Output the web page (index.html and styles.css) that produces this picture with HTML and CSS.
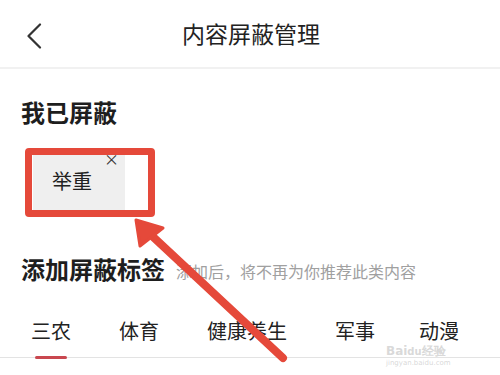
FILE: index.html
```html
<!DOCTYPE html>
<html lang="zh">
<head>
<meta charset="utf-8">
<link rel="stylesheet" href="styles.css">
</head>
<body>
<div class="page">
  <header class="header">
    <svg class="back" width="16" height="26" viewBox="0 0 16 26"><path d="M14 1.5 L2.5 13 L14 24.5" fill="none" stroke="#333" stroke-width="2.2" stroke-linecap="round" stroke-linejoin="round"/></svg>
    <div class="title">内容屏蔽管理</div>
  </header>

  <section class="blocked">
    <h2 class="heading">我已屏蔽</h2>
    <div class="tags">
      <div class="tag">举重<span class="close">×</span></div>
    </div>
  </section>

  <section class="add">
    <div class="add-head">
      <h2 class="heading">添加屏蔽标签</h2>
      <span class="hint">添加后，将不再为你推荐此类内容</span>
    </div>
    <nav class="tabs">
      <div class="tab active">三农</div>
      <div class="tab">体育</div>
      <div class="tab">健康养生</div>
      <div class="tab">军事</div>
      <div class="tab">动漫</div>
    </nav>
  </section>

  <div class="watermark">
    <div class="wm-main">Bai<span class="wm-du">du</span>经验</div>
    <div class="wm-sub">jingyan.baidu.com</div>
  </div>

  <div class="highlight"></div>
  <svg class="arrow" width="500" height="375" viewBox="0 0 500 375">
    <line x1="283" y1="358" x2="150" y2="234" stroke="#e5493a" stroke-width="8" stroke-linecap="round"/>
    <polygon points="136,220 163,228 140,246" fill="#e5493a" stroke="#e5493a" stroke-width="3" stroke-linejoin="round"/>
  </svg>
</div>
</body>
</html>
```
FILE: styles.css
```css
* { box-sizing: border-box; margin: 0; padding: 0; }
html, body { background: #fff; }
body {
  font-family: "Noto Sans CJK SC", "Noto Sans", sans-serif;
  color: #222;
  width: 500px;
  height: 375px;
  overflow: hidden;
}
.page { position: relative; width: 500px; height: 375px; }

.header {
  height: 69px;
  border-bottom: 2px solid #f1f1f1;
  display: flex;
  align-items: center;
  justify-content: center;
  position: relative;
}
.back { position: absolute; left: 26px; top: 23px; }
.title { font-size: 23px; line-height: 30px; color: #222; margin-left: 2px; margin-top: -1px; }

.heading { font-size: 24px; line-height: 32px; font-weight: 700; color: #1e1e1e; }

.blocked { padding-left: 21px; padding-top: 27px; }
.tags { display: flex; margin-top: 24px; padding-left: 12px; }
.tag {
  position: relative;
  width: 92px;
  height: 58px;
  background: #efefef;
  font-size: 20px;
  line-height: 58px;
  padding-left: 19px;
  color: #222;
}
.close {
  position: absolute;
  left: 71px;
  top: -22px;
  font-size: 15px;
  color: #333;
}

.add { margin-top: 43px; }
.add-head { display: flex; align-items: center; padding-left: 21px; gap: 11px; }
.hint { font-size: 16px; color: #a0a0a0; margin-top: 3px; }

.tabs {
  display: flex;
  gap: 48px;
  margin-top: 32px;
  padding-left: 31px;
  border-bottom: 1px solid #e3e3e3;
}
.tab {
  position: relative;
  font-size: 20px;
  line-height: 28px;
  padding-bottom: 12px;
  color: #222;
}
.tab:nth-child(5) { margin-left: -4px; }
.tab.active::after {
  content: "";
  position: absolute;
  left: 4px;
  right: 4px;
  bottom: -2px;
  height: 3px;
  border-radius: 2px;
  background: #c9474f;
}

.watermark {
  position: absolute;
  left: 386px;
  top: 345px;
  color: rgba(200, 200, 200, 0.7);
  font-family: "DejaVu Sans", sans-serif;
}
.wm-main { font-size: 12px; line-height: 13px; font-weight: 700; }
.wm-du { font-size: 10px; }
.wm-sub { font-size: 7px; line-height: 9px; margin-top: 1px; }

.highlight {
  position: absolute;
  left: 25px;
  top: 148px;
  width: 130px;
  height: 69px;
  border: 7px solid #e5493a;
  border-radius: 4px;
}
.arrow { position: absolute; left: 0; top: 0; pointer-events: none; }
```
